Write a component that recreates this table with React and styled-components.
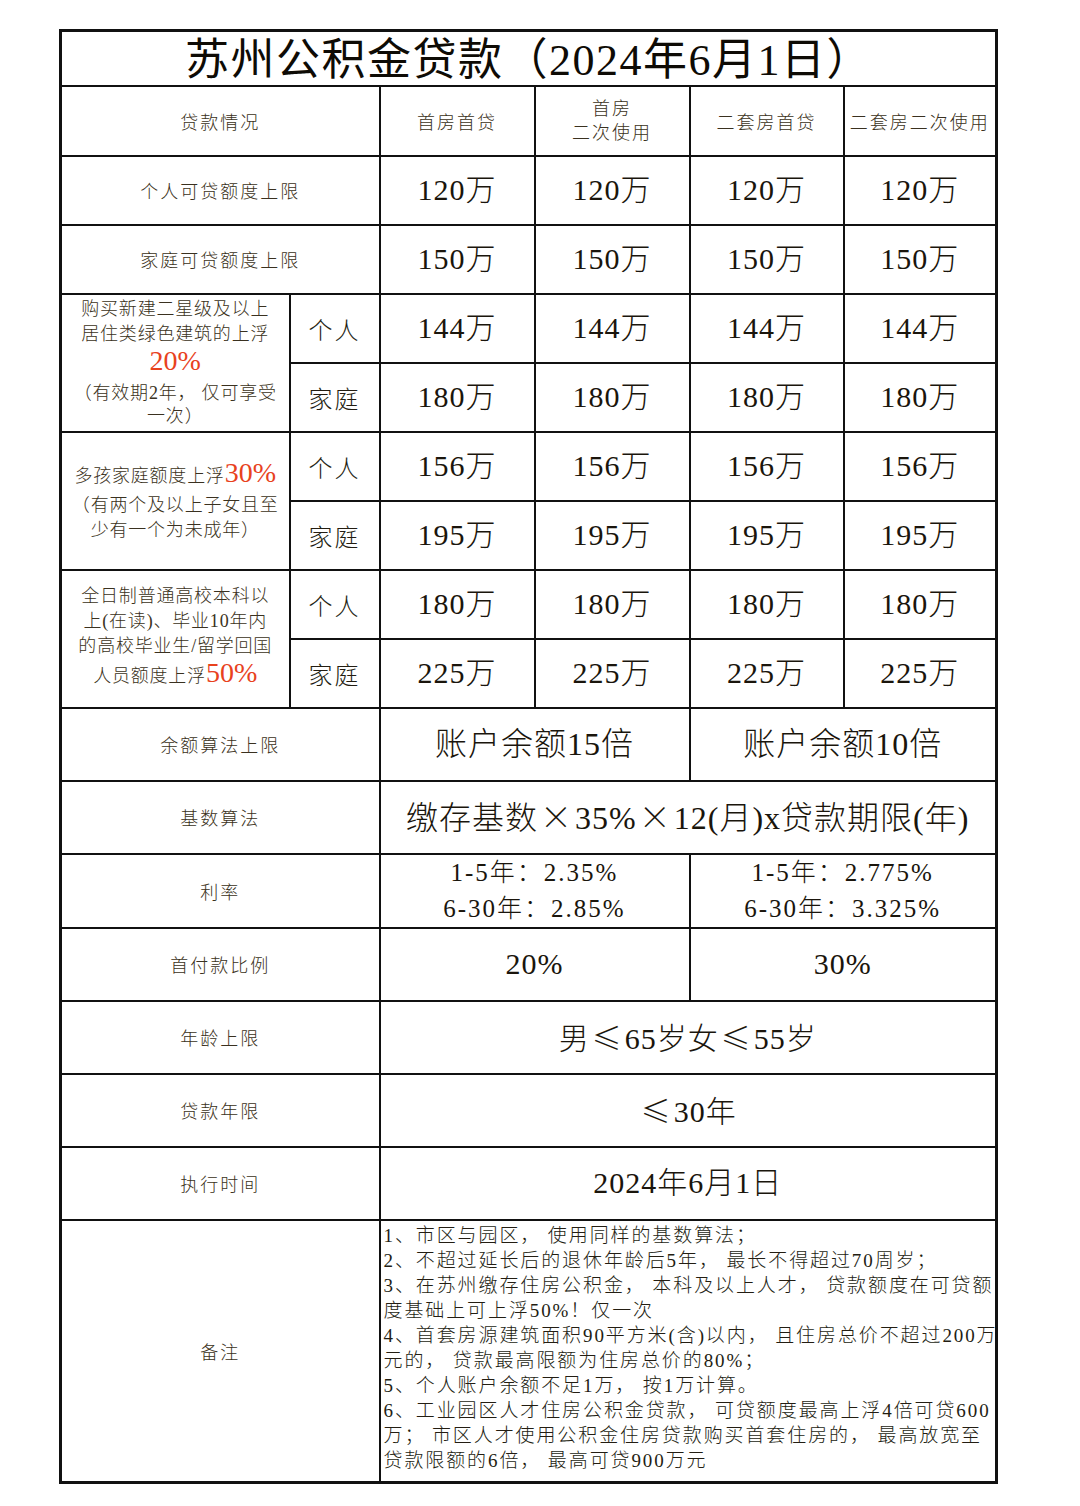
import { Fragment } from "react";
import styled, { createGlobalStyle } from "styled-components";

const GlobalStyle = createGlobalStyle`
    html, body {
        margin: 0;
        padding: 0;
        background: #FFFFFF;
    }
    body {
        font-family: "Liberation Serif", "Noto Sans CJK SC", serif;
        color: #231d12;
    }
`;

const columns = ["首房首贷", ["首房", "二次使用"], "二套房首贷", "二套房二次使用"];

const limitRows = [
    { label: "个人可贷额度上限", value: "120万" },
    { label: "家庭可贷额度上限", value: "150万" },
];

// each line: [text, red part, kind]
const bonusGroups = [
    {
        lines: [
            ["购买新建二星级及以上"],
            ["居住类绿色建筑的上浮"],
            ["", "20%", "tall"],
            ["（有效期2年， 仅可享受"],
            ["一次）", "", "short"],
        ],
        top: true,
        person: "144万",
        family: "180万",
    },
    {
        lines: [
            ["多孩家庭额度上浮", "30%", "tall"],
            ["（有两个及以上子女且至"],
            ["少有一个为未成年）"],
        ],
        person: "156万",
        family: "195万",
    },
    {
        lines: [
            ["全日制普通高校本科以"],
            ["上(在读)、毕业10年内"],
            ["的高校毕业生/留学回国"],
            ["人员额度上浮", "50%", "tall"],
        ],
        person: "180万",
        family: "225万",
    },
];

const notes = [
    "1、市区与园区， 使用同样的基数算法；",
    "2、不超过延长后的退休年龄后5年， 最长不得超过70周岁；",
    "3、在苏州缴存住房公积金， 本科及以上人才， 贷款额度在可贷额",
    "度基础上可上浮50%！仅一次",
    "4、首套房源建筑面积90平方米(含)以内， 且住房总价不超过200万",
    "元的， 贷款最高限额为住房总价的80%；",
    "5、个人账户余额不足1万， 按1万计算。",
    "6、工业园区人才住房公积金贷款， 可贷额度最高上浮4倍可贷600",
    "万； 市区人才使用公积金住房贷款购买首套住房的， 最高放宽至",
    "贷款限额的6倍， 最高可贷900万元",
];

export default function App() {
    return (
        <Page>
            <GlobalStyle />
            <Sheet>
                <colgroup>
                    <col style={{ width: 229 }} />
                    <col style={{ width: 90 }} />
                    <col style={{ width: 155 }} />
                    <col style={{ width: 155 }} />
                    <col style={{ width: 154 }} />
                    <col style={{ width: 153 }} />
                </colgroup>
                <tbody>
                    <Row $h={55}>
                        <Title colSpan={6}>苏州公积金贷款（2024年6月1日）</Title>
                    </Row>
                    <Row $h={70}>
                        <Label colSpan={2}>贷款情况</Label>
                        {columns.map((c, i) => (
                            <Label key={i}>
                                {Array.isArray(c) ? c.map(t => <Line key={t} $kind="head">{t}</Line>) : c}
                            </Label>
                        ))}
                    </Row>
                    {limitRows.map(r => (
                        <Row $h={69} key={r.label}>
                            <Label colSpan={2}>{r.label}</Label>
                            {[0, 1, 2, 3].map(i => <Value key={i}>{r.value}</Value>)}
                        </Row>
                    ))}
                    {bonusGroups.map((g, gi) => (
                        <Fragment key={gi}>
                            <Row $h={69}>
                                <Group rowSpan={2} $top={g.top}>
                                    <GroupText $top={g.top}>
                                        {g.lines.map(([text, red, kind], li) => (
                                            <Line key={li} $kind={kind}>
                                                {text}
                                                {red && <Red>{red}</Red>}
                                            </Line>
                                        ))}
                                    </GroupText>
                                </Group>
                                <Who>个人</Who>
                                {[0, 1, 2, 3].map(i => <Value key={i}>{g.person}</Value>)}
                            </Row>
                            <Row $h={69}>
                                <Who>家庭</Who>
                                {[0, 1, 2, 3].map(i => <Value key={i}>{g.family}</Value>)}
                            </Row>
                        </Fragment>
                    ))}
                    <Row $h={73}>
                        <Label colSpan={2}>余额算法上限</Label>
                        <Value colSpan={2} $size={32}>账户余额15倍</Value>
                        <Value colSpan={2} $size={32}>账户余额10倍</Value>
                    </Row>
                    <Row $h={73}>
                        <Label colSpan={2}>基数算法</Label>
                        <Value colSpan={4} $size={32}>
                            缴存基数<Sym>×</Sym>35%<Sym>×</Sym>12(月)x贷款期限(年)
                        </Value>
                    </Row>
                    <Row $h={73}>
                        <Label colSpan={2}>利率</Label>
                        <Value colSpan={2} $size={25} $spaced>
                            <Line $kind="rate">1-5年：2.35%</Line>
                            <Line $kind="rate">6-30年：2.85%</Line>
                        </Value>
                        <Value colSpan={2} $size={25} $spaced>
                            <Line $kind="rate">1-5年：2.775%</Line>
                            <Line $kind="rate">6-30年：3.325%</Line>
                        </Value>
                    </Row>
                    <Row $h={73}>
                        <Label colSpan={2}>首付款比例</Label>
                        <Value colSpan={2}>20%</Value>
                        <Value colSpan={2}>30%</Value>
                    </Row>
                    <Row $h={73}>
                        <Label colSpan={2}>年龄上限</Label>
                        <Value colSpan={4}>男<Sym>≤</Sym>65岁女<Sym>≤</Sym>55岁</Value>
                    </Row>
                    <Row $h={73}>
                        <Label colSpan={2}>贷款年限</Label>
                        <Value colSpan={4}><Sym>≤</Sym>30年</Value>
                    </Row>
                    <Row $h={73}>
                        <Label colSpan={2}>执行时间</Label>
                        <Value colSpan={4}>2024年6月1日</Value>
                    </Row>
                    <Row $h={263}>
                        <Label colSpan={2}>备注</Label>
                        <Notes colSpan={4}>
                            {notes.map(n => <NoteLine key={n}>{n}</NoteLine>)}
                        </Notes>
                    </Row>
                </tbody>
            </Sheet>
        </Page>
    );
}

const lineHeights = { tall: 34, short: 20, head: 24, rate: 36 };

const Page = styled.div`
    padding: 29px 0 20px 59px;
    width: 1020px;
`;

const Sheet = styled.table`
    width: 936px;
    table-layout: fixed;
    border-collapse: collapse;
    border: 3px solid #111;

    td {
        border: 2px solid #111;
        padding: 0;
        text-align: center;
        vertical-align: middle;
    }
`;

const Row = styled.tr`
    height: ${p => p.$h}px;
`;

const Title = styled.td`
    font-size: 44px;
    font-weight: 400;
    letter-spacing: 1.5px;
    color: #0e0b05;
    line-height: 44px;
    padding-top: 6px !important;
`;

const Label = styled.td`
    font-size: 18px;
    letter-spacing: 2px;
    font-weight: 300;
    color: #3a3120;
`;

const Line = styled.div`
    white-space: nowrap;
    line-height: ${p => lineHeights[p.$kind] || 25}px;
`;

const Red = styled.span`
    color: #e8421d;
    font-size: 28px;
    letter-spacing: 0;
    line-height: 1;
`;

const Sym = styled.span`
    font-family: "Noto Sans CJK SC", sans-serif;
    font-weight: 300;
    margin: 0 2px;
`;

const Group = styled.td`
    vertical-align: ${p => (p.$top ? "top" : "middle")} !important;
`;

const GroupText = styled.div`
    font-size: 18px;
    font-weight: 300;
    letter-spacing: 0.8px;
    color: #3a3120;
    padding-top: ${p => (p.$top ? 2 : 0)}px;
    height: ${p => (p.$top ? "134px" : "auto")};
    overflow: ${p => (p.$top ? "hidden" : "visible")};
`;

const Who = styled.td`
    font-size: 24px;
    font-weight: 300;
    letter-spacing: 2px;
    color: #231d12;
`;

const Value = styled.td`
    font-size: ${p => p.$size || 30}px;
    font-weight: 300;
    letter-spacing: ${p => (p.$spaced ? 2 : 1)}px;
    color: #1a150c;
    line-height: 1.2;
`;

const Notes = styled.td`
    text-align: left !important;
    vertical-align: top !important;
    padding: 2px 0 0 3px !important;
`;

const NoteLine = styled.div`
    font-size: 19px;
    font-weight: 300;
    letter-spacing: 1.9px;
    line-height: 25px;
    white-space: nowrap;
    color: #231d12;
`;
